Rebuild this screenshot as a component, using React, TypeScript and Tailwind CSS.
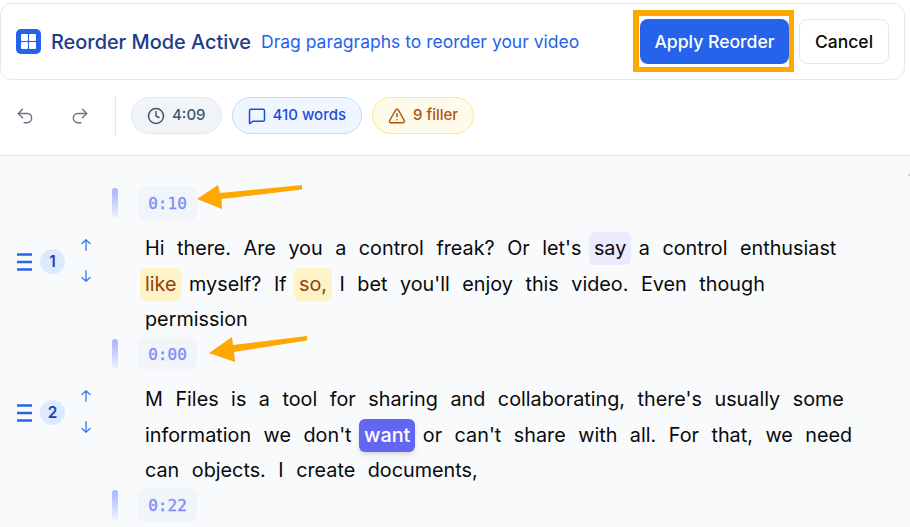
import React from "react";
import { Clock, MessageSquare, Redo2, TriangleAlert, Undo2 } from "lucide-react";

type Word = { t: string; kind?: "filler" | "soft" | "active" };

const w = (s: string): Word[] => s.split(" ").map((t) => ({ t }));

const para1: Word[] = [
  ...w("Hi there. Are you a control freak? Or let's"),
  { t: "say", kind: "soft" },
  ...w("a control enthusiast"),
  { t: "like", kind: "filler" },
  ...w("myself? If"),
  { t: "so,", kind: "filler" },
  ...w("I bet you'll enjoy this video. Even though permission"),
];

const para2: Word[] = [
  ...w("M Files is a tool for sharing and collaborating, there's usually some information we don't"),
  { t: "want", kind: "active" },
  ...w("or can't share with all. For that, we need can objects. I create documents,"),
];

const wordClass = {
  filler: "bg-[#fef3c7] text-[#92400e]",
  soft: "bg-[#ede9fe]",
  active: "bg-[#6366f1] text-white font-medium shadow-md",
};

const Stamp = ({ time }: { time: string }) => (
  <div className="flex items-center gap-5 h-[34px]">
    <div className="w-1.5 h-[30px] rounded-full bg-gradient-to-b from-[#a5b4fc] to-[#eef2ff]" />
    <div className="flex items-center justify-center w-[59px] h-[34px] pt-px rounded-lg bg-[#f1f5f9] text-[#818cf8] text-[16px] [-webkit-text-stroke:0.35px_#818cf8] font-['DejaVu_Sans_Mono',monospace]">
      {time}
    </div>
  </div>
);

const Segment = ({ n, time, words }: { n: number; time: string; words: Word[] }) => (
  <div className="flex items-center h-[151px]">
    <div className="flex items-center w-[112px] pl-[17px]">
      <svg width="15" height="18" viewBox="0 0 15 18" className="text-[#2563eb]" fill="none" stroke="currentColor" strokeWidth="2.4">
        <path d="M0 1.5H15M0 9H15M0 16.5H15" />
      </svg>
      <div className="flex items-center justify-center ml-2 w-[25px] h-[25px] rounded-full bg-[#dbeafe] text-[#1e40af] text-[15.4px] font-semibold">
        {n}
      </div>
      <div className="flex flex-col gap-[19px] ml-4 mb-[2px] text-[#3b82f6]">
        <svg width="10" height="12" viewBox="0 0 10 12" fill="none" stroke="currentColor" strokeWidth="1.4" strokeLinecap="round" strokeLinejoin="round">
          <path d="M1 4.5L5 0.8L9 4.5M5 0.8V11.3" />
        </svg>
        <svg width="10" height="12" viewBox="0 0 10 12" fill="none" stroke="currentColor" strokeWidth="1.4" strokeLinecap="round" strokeLinejoin="round">
          <path d="M1 7.5L5 11.2L9 7.5M5 11.2V0.7" />
        </svg>
      </div>
    </div>
    <div className="flex-1 self-start">
      <Stamp time={time} />
      <p className="mt-[11px] ml-[28px] w-[730px] text-[19.8px] leading-[35.6px] text-[#0a0a0a]">
        {words.map((word, i) => (
          <span key={i} className={`inline-block px-[5px] leading-[33px] rounded-md mr-[2.5px] ${word.kind ? wordClass[word.kind] : ""}`}>
            {word.t}
          </span>
        ))}
      </p>
    </div>
  </div>
);

export default function App() {
  return (
    <div className="relative w-[910px] h-[527px] overflow-hidden bg-white font-['Inter',sans-serif]">
      <div className="pt-[3px] pr-[5px]">
        <div className="flex items-center justify-between h-[77px] pl-[15px] pr-[15px] bg-white border border-[#e2e8f0] rounded-xl">
          <div className="flex items-center">
            <div className="flex items-center justify-center w-[25px] h-[25px] rounded-[5px] bg-[#2563eb]">
              <div className="grid grid-cols-2 gap-[1.5px] w-[15px] h-[15px]">
                <span className="bg-white rounded-[1px]" />
                <span className="bg-white rounded-[1px]" />
                <span className="bg-white rounded-[1px]" />
                <span className="bg-white rounded-[1px]" />
              </div>
            </div>
            <span className="ml-[10px] pt-[2px] text-[19.9px] font-medium text-[#1e3a8a]">Reorder Mode Active</span>
            <span className="ml-[10px] pt-[2px] text-[17.5px] text-[#2563eb]">Drag paragraphs to reorder your video</span>
          </div>
          <div className="flex items-center gap-[10px]">
            <button className="w-[149px] h-[45px] pt-[2px] rounded-lg bg-[#2563eb] text-white text-[17.6px] font-medium">
              Apply Reorder
            </button>
            <button className="w-[90px] h-[45px] pt-[2px] rounded-lg bg-white border border-[#e2e8f0] text-[#0a0a0a] text-[17.5px] font-medium">
              Cancel
            </button>
          </div>
        </div>
      </div>

      <div className="flex items-center h-[76px] pb-[4px] pl-[15px] border-b border-[#e2e8f0]">
        <Undo2 size={20} strokeWidth={1.75} className="text-[#6b7280]" />
        <Redo2 size={20} strokeWidth={1.75} className="ml-[35px] text-[#6b7280]" />
        <div className="w-px h-10 ml-[25px] bg-[#e2e8f0]" />
        <div className="flex items-center gap-[7px] h-[37px] ml-[15px] pl-[15px] pr-[15px] rounded-full bg-[#f1f5f9] border border-[#e2e8f0] text-[#475569] text-[15px] font-medium">
          <Clock size={18} strokeWidth={2} />
          4:09
        </div>
        <div className="flex items-center gap-[7px] h-[37px] ml-[10px] pl-[15px] pr-[15px] rounded-full bg-[#eff6ff] border border-[#bfdbfe] text-[#1d4ed8] text-[15px] font-medium">
          <MessageSquare size={18} strokeWidth={2} />
          410 words
        </div>
        <div className="flex items-center gap-[7px] h-[37px] ml-[10px] pl-[15px] pr-[15px] rounded-full bg-[#fffbeb] border border-[#fde68a] text-[#b45309] text-[15px] font-medium">
          <TriangleAlert size={18} strokeWidth={2} />
          9 filler
        </div>
      </div>

      <div className="h-[371px] pt-[30px] bg-[#f8fafc]">
        <Segment n={1} time="0:10" words={para1} />
        <Segment n={2} time="0:00" words={para2} />
        <div className="pl-[112px]">
          <Stamp time="0:22" />
        </div>
      </div>

      {/* annotation overlays */}
      <div className="absolute left-[633px] top-[10px] w-[161px] h-[62px] border-[5px] border-l-[6px] border-t-[6px] border-[#ffa800] pointer-events-none" />
      <svg className="absolute left-0 top-0 pointer-events-none" width="910" height="527">
        <path d="M302 185 L220 193 L218 185 L197 199 L222 209 L221.5 199 L302 189.5 Z" fill="#ffa800" />
        <path d="M307 336 L233 345 L232 337 L209 353 L235 362 L234 352 L307 340.5 Z" fill="#ffa800" />
      </svg>
      <div className="absolute left-[908px] top-[174px] w-[2px] h-[2px] bg-[#cbd5e1]" />
    </div>
  );
}
